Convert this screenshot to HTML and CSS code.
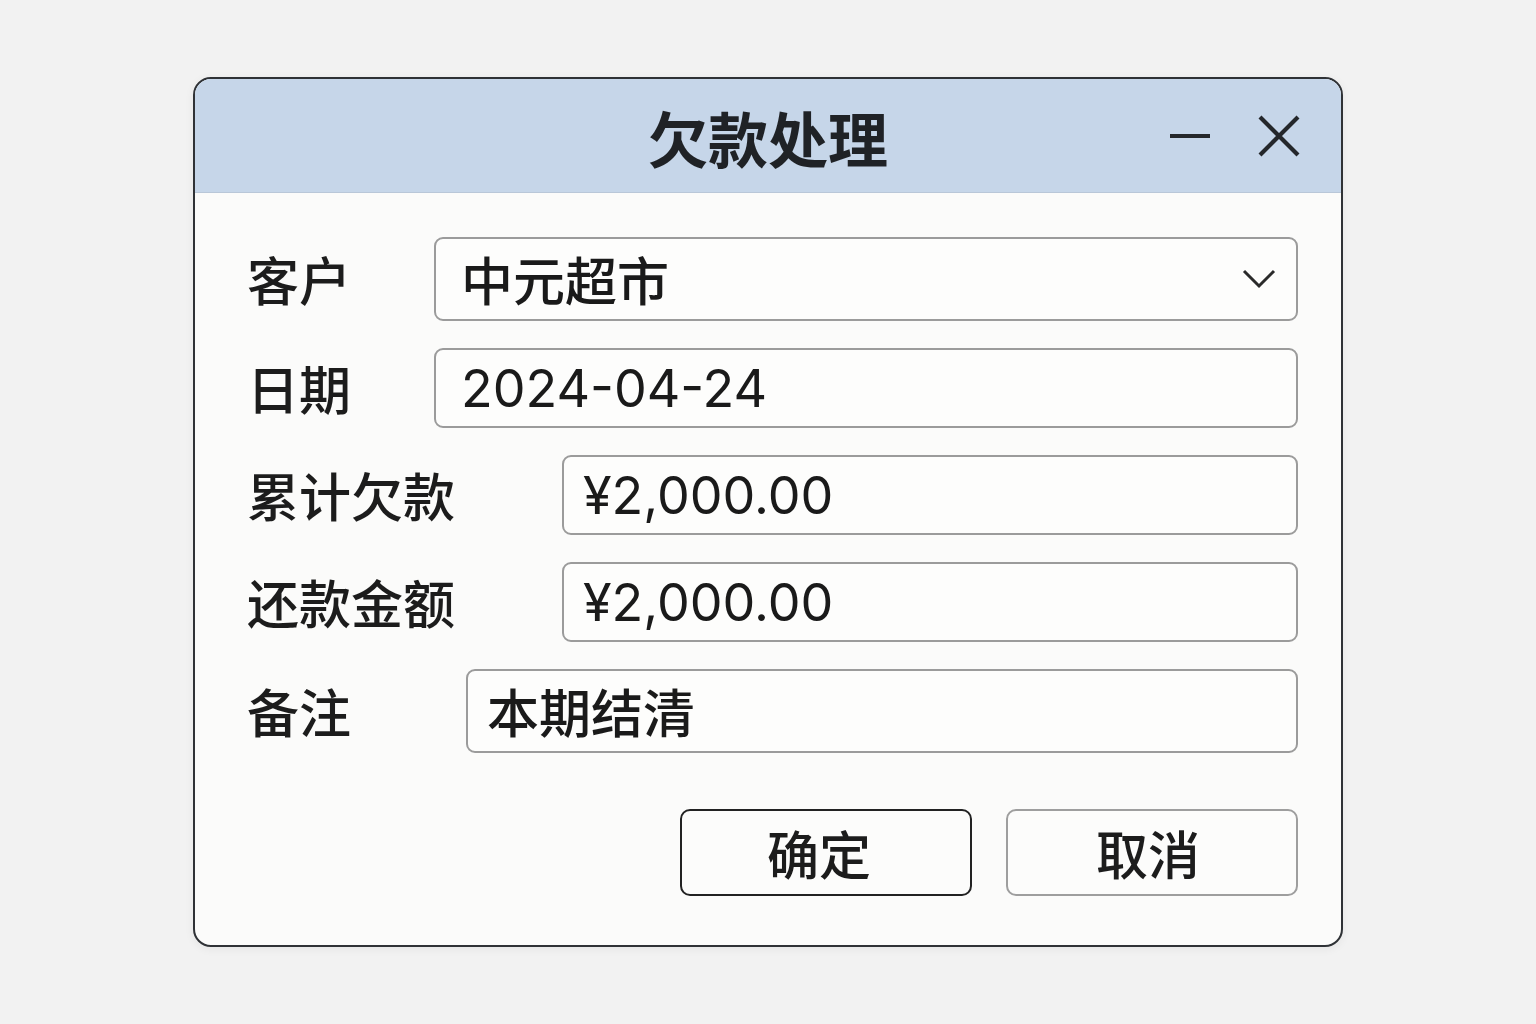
FILE: index.html
```html
<!DOCTYPE html>
<html lang="zh-CN">
<head>
<meta charset="utf-8">
<title>欠款处理</title>
<link rel="stylesheet" href="styles.css">
</head>
<body>
<div class="dialog">
  <div class="titlebar">
    <div class="spacer"></div>
    <div class="title">欠款处理</div>
    <div class="controls">
      <svg class="ctl" width="44" height="44" viewBox="0 0 44 44"><line x1="2" y1="22" x2="42" y2="22" stroke="#24272b" stroke-width="4"/></svg>
      <svg class="ctl" width="44" height="44" viewBox="0 0 44 44"><path d="M3 3 L41 41 M41 3 L3 41" stroke="#24272b" stroke-width="4.2" fill="none"/></svg>
    </div>
  </div>
  <div class="form">
    <div class="row">
      <div class="label w1">客户</div>
      <div class="field select tall">
        <span class="val">中元超市</span>
        <svg class="chev" width="34" height="20" viewBox="0 0 34 20"><polyline points="2,2 17,17 32,2" fill="none" stroke="#2a2a2a" stroke-width="3"/></svg>
      </div>
    </div>
    <div class="row">
      <div class="label w1">日期</div>
      <div class="field"><span class="val num">2024-04-24</span></div>
    </div>
    <div class="row">
      <div class="label w2">累计欠款</div>
      <div class="field narrow"><span class="val num">¥2,000.00</span></div>
    </div>
    <div class="row">
      <div class="label w2">还款金额</div>
      <div class="field narrow"><span class="val num">¥2,000.00</span></div>
    </div>
    <div class="row">
      <div class="label w3">备注</div>
      <div class="field narrow tall"><span class="val">本期结清</span></div>
    </div>
    <div class="actions">
      <button class="btn primary">确定</button>
      <button class="btn">取消</button>
    </div>
  </div>
</div>
</body>
</html>
```

FILE: styles.css
```css
html, body {
  margin: 0;
  padding: 0;
}
body {
  width: 1536px;
  height: 1024px;
  background: #f2f2f2;
  display: flex;
  align-items: center;
  justify-content: center;
  font-family: "Noto Sans CJK SC", "Noto Sans", sans-serif;
  color: #1c1c1c;
}
.dialog {
  width: 1150px;
  height: 870px;
  box-sizing: border-box;
  border: 2px solid #2f3236;
  border-radius: 18px;
  overflow: hidden;
  background: #fbfbfa;
  box-shadow: 0 2px 10px rgba(0,0,0,0.06);
}
.titlebar {
  height: 114px;
  box-sizing: border-box;
  background: #c6d6e9;
  border-bottom: 1px solid #b9c7d8;
  display: grid;
  grid-template-columns: 1fr auto 1fr;
  align-items: center;
  padding: 0 40px 0 40px;
}
.title {
  font-size: 60px;
  font-weight: 700;
  color: #1f2226;
  line-height: 1;
  padding-top: 2px;
}
.controls {
  display: flex;
  justify-content: flex-end;
  align-items: center;
  gap: 45px;
}
.ctl {
  display: block;
}
.form {
  padding: 44px 43px 0 52px;
  display: flex;
  flex-direction: column;
  gap: 27px;
}
.row {
  display: flex;
  align-items: center;
}
.label {
  font-size: 52px;
  font-weight: 500;
  line-height: 1;
  flex: none;
  color: #1c1c1c;
}
.w1 { width: 187px; }
.w2 { width: 315px; }
.w3 { width: 219px; }
.field {
  flex: 1;
  height: 80px;
  box-sizing: border-box;
  border: 2px solid #9b9b9b;
  border-radius: 9px;
  background: #fdfdfc;
  display: flex;
  align-items: center;
  justify-content: space-between;
  padding: 0 20px 0 25px;
}
.field.tall {
  height: 84px;
}
.field.narrow {
  padding-left: 19px;
}
.val {
  font-size: 52px;
  font-weight: 500;
  line-height: 1;
  color: #1a1a1a;
}
.val.num {
  font-family: "Inter", "Noto Sans CJK SC", sans-serif;
  font-size: 52px;
  font-weight: 400;
  padding-top: 2px;
}
.chev {
  display: block;
}
.actions {
  display: flex;
  justify-content: flex-end;
  gap: 34px;
  margin-top: 29px;
}
.btn {
  width: 292px;
  height: 87px;
  box-sizing: border-box;
  border: 2px solid #9e9e9e;
  border-radius: 10px;
  background: #fcfcfb;
  font-family: "Noto Sans CJK SC", "Noto Sans", sans-serif;
  font-size: 52px;
  font-weight: 500;
  color: #1c1c1c;
  line-height: 1;
  padding: 0 8px 0 0;
}
.btn.primary {
  border-color: #222;
  padding-right: 14px;
}
```
